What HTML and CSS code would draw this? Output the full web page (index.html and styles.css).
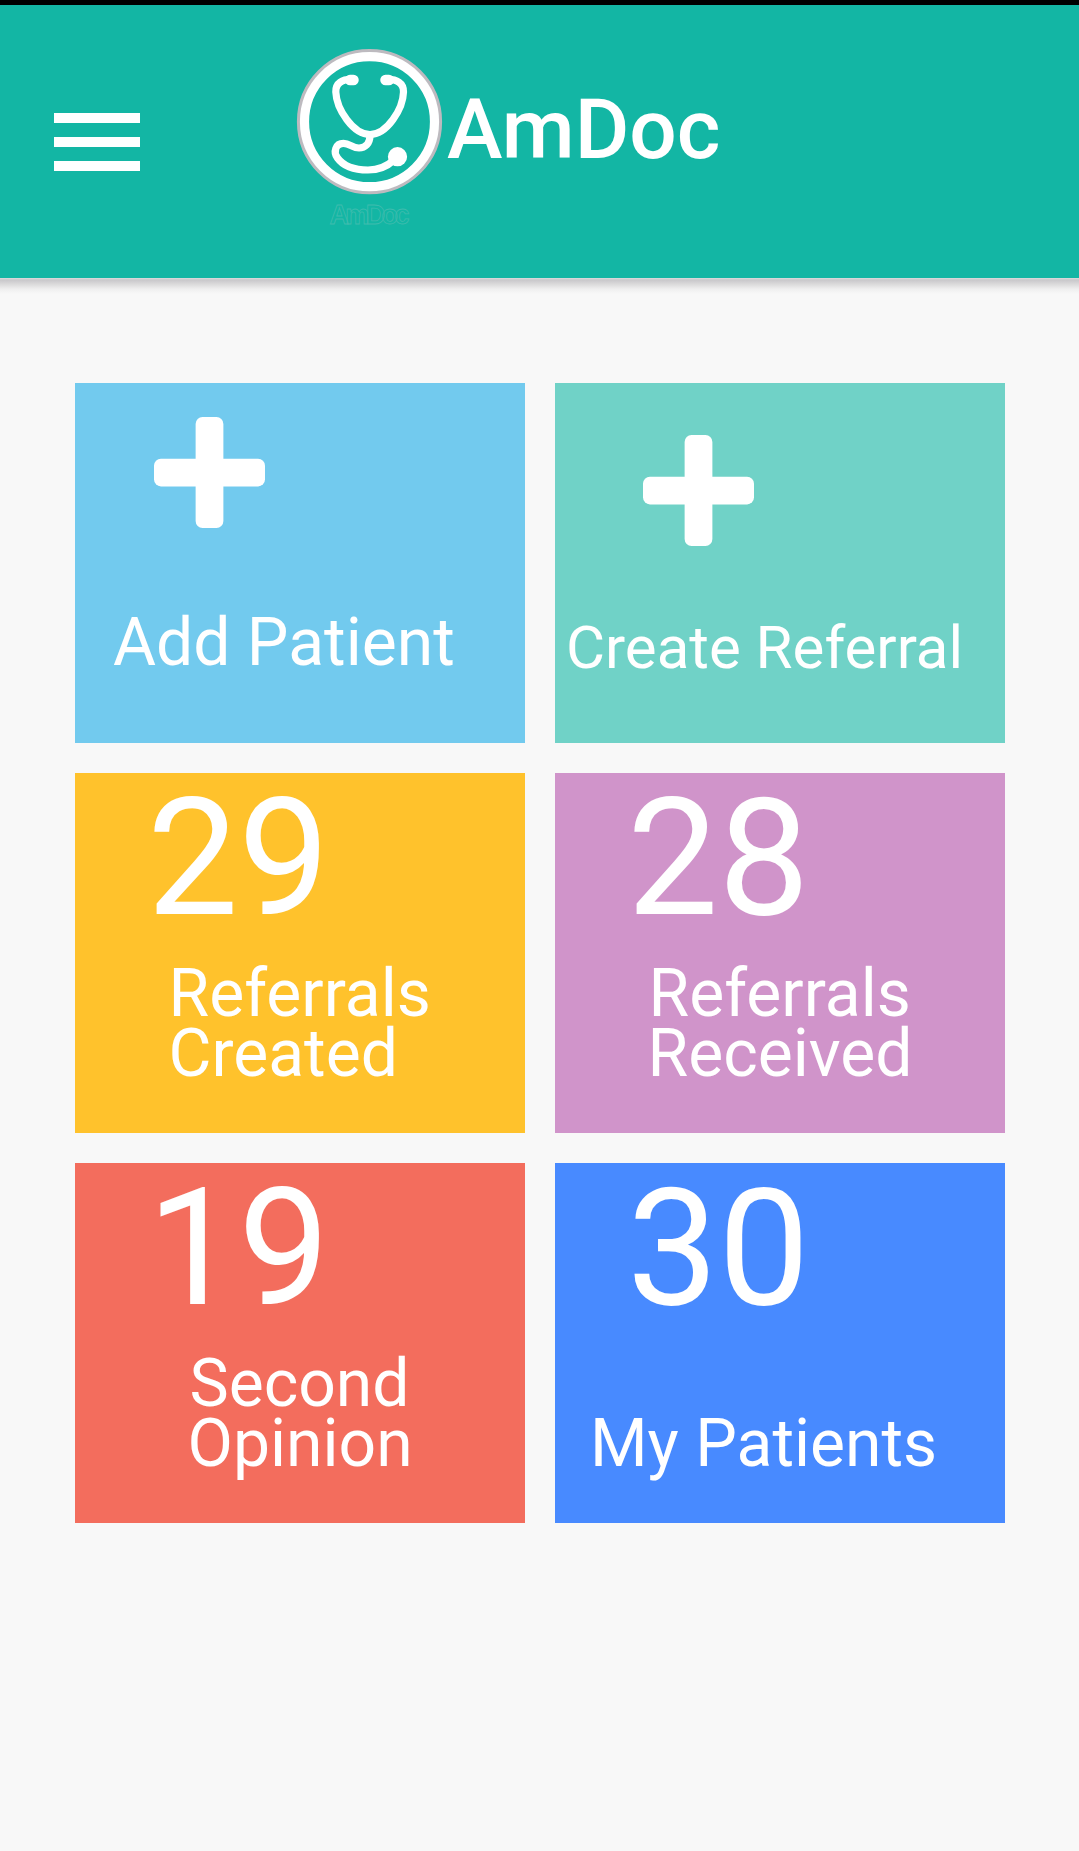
FILE: index.html
```html
<!DOCTYPE html>
<html lang="en">
<head>
    <meta charset="UTF-8">
    <meta name="viewport" content="width=device-width, initial-scale=1.0">
    <title>AmDoc</title>
    <link rel="stylesheet" href="styles.css">
</head>
<body>
    <header class="navbar">
        <button class="menu-button" aria-label="Menu">
            <span></span>
            <span></span>
            <span></span>
        </button>
        <svg class="logo" width="180" height="210" viewBox="0 0 180 210">
            <circle cx="89.5" cy="91.7" r="70.8" fill="none" stroke="#bdbabf" stroke-width="3.6"/>
            <circle cx="89.5" cy="91.7" r="65" fill="none" stroke="#fff" stroke-width="9.2"/>
            <g fill="none" stroke="#fff" stroke-width="7.2" stroke-linecap="round">
                <path d="M73 49.5C62 49 55.5 53 55.8 62C56.5 79 73 104.5 90 104.5C107 104.5 123 79 123.5 62C123.7 53 117 49 106 49.5"/>
                <path d="M90 105C90 114 85 118 79 118C72 118 70 113.3 63.5 113.3C55.5 113.3 53 122 57.5 128C64 137 76 140 88 140C99 140 107 136.5 114 130"/>
            </g>
            <path d="M70 50H73.5M105.5 50H109" stroke="#fff" stroke-width="10.5" stroke-linecap="round"/>
            <circle cx="117.5" cy="126.7" r="9.6" fill="#fff"/>
            <text class="logo-caption" x="49.5" y="193.5" textLength="80">AmDoc</text>
        </svg>
        <h1>AmDoc</h1>
    </header>
    <div class="navbar-shadow"></div>

    <main class="dashboard">
        <a class="card add-patient">
            <svg class="plus" width="111" height="111" viewBox="0 0 112 112">
                <rect x="42" y="0" width="28" height="112" rx="7"/>
                <rect x="0" y="42" width="112" height="28" rx="7"/>
            </svg>
            <span class="label">Add Patient</span>
        </a>
        <a class="card create-referral">
            <svg class="plus" width="111" height="111" viewBox="0 0 112 112">
                <rect x="42" y="0" width="28" height="112" rx="7"/>
                <rect x="0" y="42" width="112" height="28" rx="7"/>
            </svg>
            <span class="label">Create Referral</span>
        </a>
        <a class="card referrals-created">
            <span class="count">29</span>
            <span class="label">Referrals<br>Created</span>
        </a>
        <a class="card referrals-received">
            <span class="count">28</span>
            <span class="label">Referrals<br><span class="second-line">Received</span></span>
        </a>
        <a class="card second-opinion">
            <span class="count">19</span>
            <span class="label">Second<br><span class="second-line">Opinion</span></span>
        </a>
        <a class="card my-patients">
            <span class="count">30</span>
            <span class="label">My Patients</span>
        </a>
    </main>
</body>
</html>
```
FILE: styles.css
```css
body { margin: 0; min-height: 100vh; box-sizing: border-box; border-top: 5px solid #000; background-color: #f8f8f8; font-family: Roboto, sans-serif; color: #fff; }

.navbar { display: flex; align-items: flex-start; height: 273px; background-color: #13b6a4; }
.navbar h1 { margin: 75px 0 0 -13px; font-size: 83.7px; line-height: 98px; font-weight: 500; }
.navbar-shadow { height: 16px; background: linear-gradient(#dcdcde, #c9c8cb 2px, #dad9da 6px, #efefef 11px, #f8f8f8); }
.menu-button { display: flex; flex-direction: column; gap: 14px; width: 86.4px; margin: 108px 0 0 54px; padding: 0; border: none; background: none; cursor: pointer; }
.menu-button span { height: 10px; background-color: #fff; }
.logo { margin: 25px 0 0 139.6px; }
.logo-caption { font-family: "Liberation Sans", sans-serif; font-size: 27px; font-weight: bold; fill: none; stroke: #3fbcae; stroke-width: 0.8; }

.dashboard { display: grid; grid-template-columns: 450px 450px; grid-auto-rows: 360px; gap: 30px; padding: 89px 0 0 75px; }
.card { display: flex; flex-direction: column; align-items: flex-start; justify-content: space-between; box-sizing: border-box; cursor: pointer; }
.plus { fill: #fff; }
.count { margin: 4px 0 0 72px; font-size: 162.5px; line-height: 164px; }
.label { font-size: 66px; line-height: 60px; white-space: nowrap; }

.add-patient { background-color: #72caee; padding: 34px 0 70px 38px; }
.add-patient .plus { margin-left: 41px; }
.create-referral { background-color: #70d2c7; padding: 52px 0 65px 11px; }
.create-referral .plus { margin-left: 77px; }
.create-referral .label { font-size: 60px; }
.referrals-created { background-color: #ffc22c; padding-bottom: 49px; }
.referrals-received { background-color: #d094ca; padding-bottom: 49px; }
.second-opinion { background-color: #f36d5d; padding-bottom: 49px; }
.my-patients { background-color: #488aff; padding-bottom: 49px; }

.referrals-created .label, .referrals-received .label { margin-left: 93.5px; }
.second-opinion .label { margin-left: 114.5px; }
.my-patients .label { margin-left: 35px; }
.referrals-received .second-line { margin-left: -1px; }
.second-opinion .second-line { margin-left: -2px; }
```
